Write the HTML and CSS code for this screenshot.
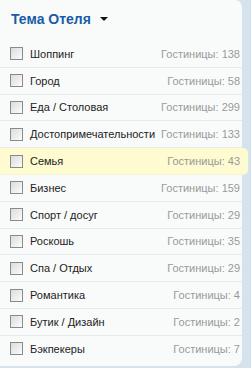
FILE: index.html
```html
<!DOCTYPE html>
<html>
<head>
<meta charset="utf-8">
<link rel="stylesheet" href="styles.css">
</head>
<body>
<div class="panel">
  <div class="head">
    <span class="title">Тема Отеля</span>
    <span class="caret"></span>
  </div>
  <ul class="list">
    <li class="row"><span class="box"></span><span class="name">Шоппинг</span><span class="count">Гостиницы: 138</span></li>
    <li class="row"><span class="box"></span><span class="name">Город</span><span class="count">Гостиницы: 58</span></li>
    <li class="row"><span class="box"></span><span class="name">Еда / Столовая</span><span class="count">Гостиницы: 299</span></li>
    <li class="row"><span class="box"></span><span class="name">Достопримечательности</span><span class="count">Гостиницы: 133</span></li>
    <li class="row hl"><span class="box"></span><span class="name">Семья</span><span class="count">Гостиницы: 43</span></li>
    <li class="row"><span class="box"></span><span class="name">Бизнес</span><span class="count">Гостиницы: 159</span></li>
    <li class="row"><span class="box"></span><span class="name">Спорт / досуг</span><span class="count">Гостиницы: 29</span></li>
    <li class="row"><span class="box"></span><span class="name">Роскошь</span><span class="count">Гостиницы: 35</span></li>
    <li class="row"><span class="box"></span><span class="name">Спа / Отдых</span><span class="count">Гостиницы: 29</span></li>
    <li class="row"><span class="box"></span><span class="name">Романтика</span><span class="count">Гостиницы: 4</span></li>
    <li class="row"><span class="box"></span><span class="name">Бутик / Дизайн</span><span class="count">Гостиницы: 2</span></li>
    <li class="row last"><span class="box"></span><span class="name">Бэкпекеры</span><span class="count">Гостиницы: 7</span></li>
  </ul>
</div>
</body>
</html>
```
FILE: styles.css
```css
html, body {
  margin: 0;
  padding: 0;
}
body {
  background: #d5e3ee;
  width: 251px;
  height: 368px;
  overflow: hidden;
  font-family: "Liberation Sans", Arial, sans-serif;
}
.panel {
  width: 242px;
  height: 366px;
  background: #f9fbfb;
  border-radius: 0 7px 8px 0;
  box-sizing: border-box;
}
.head {
  display: flex;
  align-items: center;
  height: 36px;
  padding: 0 0 0 11px;
  gap: 9px;
}
.title {
  font-size: 14px;
  font-weight: bold;
  color: #1b5ba6;
  padding-top: 1px;
}
.caret {
  width: 0;
  height: 0;
  border-left: 4px solid transparent;
  border-right: 4px solid transparent;
  border-top: 4px solid #111;
  margin-top: 2px;
}
.list {
  list-style: none;
  margin: 4px 0 0 0;
  padding: 0;
}
.row {
  display: flex;
  align-items: center;
  height: 25.8px;
  border-bottom: 1px solid #e6eaec;
  padding: 0 2px 0 10px;
  font-size: 11px;
}
.row:first-child {
  padding-top: 1px;
}
.row.last {
  border-bottom: none;
}
.row.hl {
  background: #fdfbcf;
  border-bottom-color: #f4f3d9;
  margin-right: -6px;
  padding-right: 8px;
  border-radius: 0 5px 5px 0;
}
.box {
  width: 11px;
  height: 11px;
  border: 1px solid #8a8a8a;
  background: linear-gradient(135deg, #dcdcdc 0%, #f2f2f2 70%, #ffffff 100%);
  flex: none;
  margin-right: 7px;
}
.name {
  color: #222;
  white-space: nowrap;
}
.count {
  margin-left: auto;
  color: #999;
  white-space: nowrap;
}
```
